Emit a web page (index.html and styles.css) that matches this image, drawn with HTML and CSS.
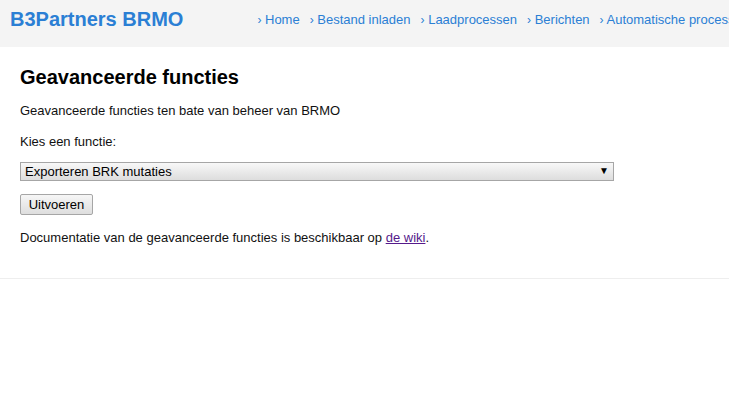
FILE: index.html
```html
<!DOCTYPE html>
<html lang="nl">
<head>
<meta charset="utf-8">
<title>B3Partners BRMO - Geavanceerde functies</title>
<link rel="stylesheet" href="styles.css">
</head>
<body>
<header class="topbar">
  <a class="brand" href="#">B3Partners BRMO</a>
  <nav class="menu">
    <a class="menu-item" href="#"><span class="chev">›</span> Home</a>
    <a class="menu-item" href="#"><span class="chev">›</span> Bestand inladen</a>
    <a class="menu-item" href="#"><span class="chev">›</span> Laadprocessen</a>
    <a class="menu-item" href="#"><span class="chev">›</span> Berichten</a>
    <a class="menu-item" href="#"><span class="chev">›</span> Automatische processen</a>
    <a class="menu-item" href="#"><span class="chev">›</span> Beheer</a>
  </nav>
</header>
<main class="content">
  <h1 class="page-title">Geavanceerde functies</h1>
  <p class="intro">Geavanceerde functies ten bate van beheer van BRMO</p>
  <p class="label">Kies een functie:</p>
  <div class="select-wrap">
    <select class="function-select">
      <option>Exporteren BRK mutaties</option>
    </select>
    <span class="select-arrow">▼</span>
  </div>
  <button class="run-button" type="button">Uitvoeren</button>
  <p class="docs">Documentatie van de geavanceerde functies is beschikbaar op <a class="wiki-link" href="#">de wiki</a>.</p>
</main>
</body>
</html>
```
FILE: styles.css
```css
html, body {
  margin: 0;
  padding: 0;
  background: #ffffff;
}

body {
  font-family: "Liberation Sans", Arial, sans-serif;
  font-size: 13px;
  color: #111111;
  overflow: hidden;
}

.topbar {
  display: flex;
  align-items: flex-start;
  height: 47px;
  box-sizing: border-box;
  padding: 8px 0 0 10px;
  background: #f4f4f4;
  white-space: nowrap;
  overflow: hidden;
}

.brand {
  font-size: 20px;
  line-height: 23px;
  font-weight: bold;
  color: #2b7fd4;
  text-decoration: none;
}

.menu {
  display: flex;
  gap: 10px;
  margin: 4px 0 0 74px;
}

.menu-item {
  font-size: 13px;
  line-height: 15px;
  color: #2b7fd4;
  text-decoration: none;
}

.chev {
  font-size: 12px;
}

.content {
  padding: 19px 20px 33px;
  border-bottom: 1px solid #eeeeee;
}

.page-title {
  margin: 0 0 14px;
  font-size: 20px;
  line-height: 23px;
  font-weight: bold;
  color: #000000;
}

.intro,
.label,
.docs {
  margin: 0;
  line-height: 15px;
}

.intro {
  margin-bottom: 16px;
}

.label {
  margin-bottom: 13px;
}

.select-wrap {
  position: relative;
  width: 594px;
  height: 19px;
  margin-bottom: 13px;
}

.function-select {
  appearance: none;
  -webkit-appearance: none;
  display: block;
  width: 100%;
  height: 19px;
  margin: 0;
  padding: 0 0 0 4px;
  border: 1px solid #a6a6a6;
  border-radius: 0;
  background: linear-gradient(#f8f8f8, #dddddd);
  font-family: "Liberation Sans", Arial, sans-serif;
  font-size: 13px;
  color: #000000;
  box-sizing: border-box;
}

.select-arrow {
  position: absolute;
  right: 5px;
  top: 3px;
  font-size: 10px;
  line-height: 12px;
  color: #000000;
  pointer-events: none;
}

.run-button {
  display: block;
  width: 73px;
  height: 21px;
  margin: 0 0 15px;
  padding: 0;
  border: 1px solid #a6a6a6;
  border-radius: 2px;
  background: linear-gradient(#f6f6f6, #dedede);
  font-family: "Liberation Sans", Arial, sans-serif;
  font-size: 13px;
  color: #000000;
  box-sizing: border-box;
}

.wiki-link {
  color: #551a8b;
  text-decoration: underline;
}
```
